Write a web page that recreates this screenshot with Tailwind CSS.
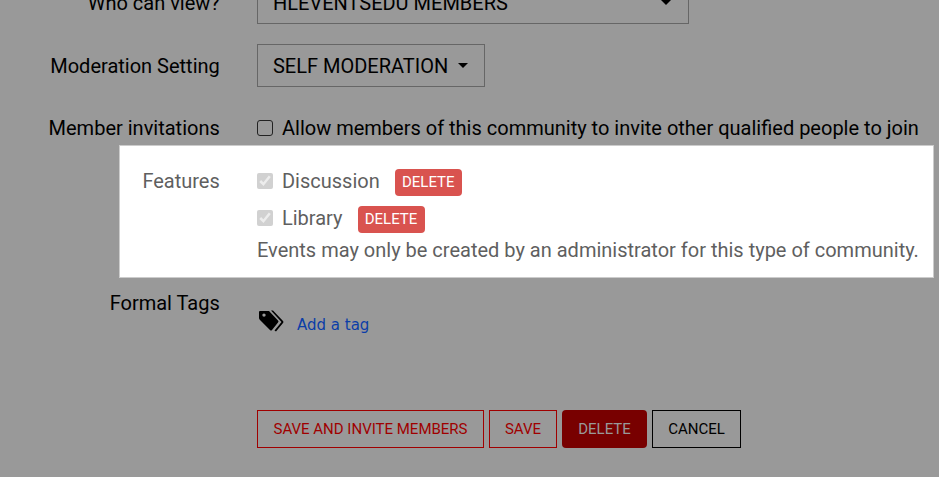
<!DOCTYPE html>
<html lang="en">
<head>
    <meta charset="UTF-8">
    <title>Community settings</title>
    <script src="https://cdn.jsdelivr.net/npm/@tailwindcss/browser@4"></script>
</head>
<body class="bg-[#999999] h-[477px] overflow-hidden font-['Roboto',sans-serif] text-[20px] text-[#000]">

    <div class="flex items-center h-[43px] -mt-[19px]">
        <div class="w-[219.8px] text-right">Who can view?</div>
        <div class="ml-[37.2px] w-[432px] h-full border border-[#666] flex items-center justify-between pl-[15px] pr-[17px]">
            <span>HLEVENTSEDU MEMBERS</span>
            <span class="w-0 h-0 border-x-[5px] border-x-transparent border-t-[5px] border-t-black"></span>
        </div>
    </div>

    <div class="flex items-center h-[43px] mt-5">
        <div class="w-[219.8px] text-right">Moderation Setting</div>
        <div class="ml-[37.2px] w-[228px] h-full border border-[#666] flex items-center gap-[10px] pl-[15px]">
            <span>SELF MODERATION</span>
            <span class="w-0 h-0 border-x-[5px] border-x-transparent border-t-[5px] border-t-black"></span>
        </div>
    </div>

    <div class="flex items-center h-[30px] mt-[26px]">
        <div class="w-[219.8px] text-right">Member invitations</div>
        <div class="ml-[37.2px] flex items-center gap-[9px]">
            <span class="w-4 h-4 border border-[#222] rounded-[3px]"></span>
            <span>Allow members of this community to invite other qualified people to join</span>
        </div>
    </div>

    <div class="ml-[119px] mt-[2px] w-[815px] h-[133px] bg-white border border-[#ccc] text-[#5f5f5f] flex pt-[20px]">
        <div class="w-[99.8px] text-right leading-[30px]">Features</div>
        <div class="ml-[37.2px]">
            <div class="flex items-center h-[30px]">
                <input type="checkbox" checked disabled class="w-4 h-4 m-0">
                <span class="ml-[9px]">Discussion</span>
                <span class="ml-[15px] mt-[2px] w-[67px] h-[27px] bg-[#d9534f] rounded text-white text-[15px] flex items-center justify-center">DELETE</span>
            </div>
            <div class="flex items-center h-[30px] mt-[7px]">
                <input type="checkbox" checked disabled class="w-4 h-4 m-0">
                <span class="ml-[9px]">Library</span>
                <span class="ml-[15px] mt-[2px] w-[67px] h-[27px] bg-[#d9534f] rounded text-white text-[15px] flex items-center justify-center">DELETE</span>
            </div>
            <div class="leading-[30px] mt-[2px]">Events may only be created by an administrator for this type of community.</div>
        </div>
    </div>

    <div class="flex mt-[10px]">
        <div class="w-[219.8px] text-right leading-[30px]">Formal Tags</div>
    </div>
    <div class="flex items-center ml-[259px] -mt-[5px] h-[24px]">
        <svg class="w-[25px] h-[22px] mb-[8px]" viewBox="0 0 25 22" fill="#000"><path fill-rule="evenodd" d="M1 1H10L19 10.5Q20 11.5 19 12.5L13 20Q12 21 11 20L1 10Q0 9 0 8V2Q0 1 1 1ZM5 3.4A1.7 1.7 0 1 0 5 6.8A1.7 1.7 0 1 0 5 3.4Z"/><path d="M12 .5H14L24 11Q25 12 24 13L17 21.5L15.5 20.5L22.5 12Z"/></svg>
        <a class="ml-[13px] font-['DejaVu_Sans',sans-serif] text-[15px] text-[#0b3ea8]">Add a tag</a>
    </div>

    <div class="flex ml-[257px] mt-[73px] gap-[5px] text-[15px] h-[38px]">
        <div class="w-[227px] border border-[#a00000] text-[#a00000] flex items-center justify-center">SAVE AND INVITE MEMBERS</div>
        <div class="w-[68px] border border-[#a00000] text-[#a00000] flex items-center justify-center">SAVE</div>
        <div class="w-[85px] bg-[#780000] rounded text-[#999999] flex items-center justify-center">DELETE</div>
        <div class="w-[89px] border border-black text-black flex items-center justify-center">CANCEL</div>
    </div>

</body>
</html>
